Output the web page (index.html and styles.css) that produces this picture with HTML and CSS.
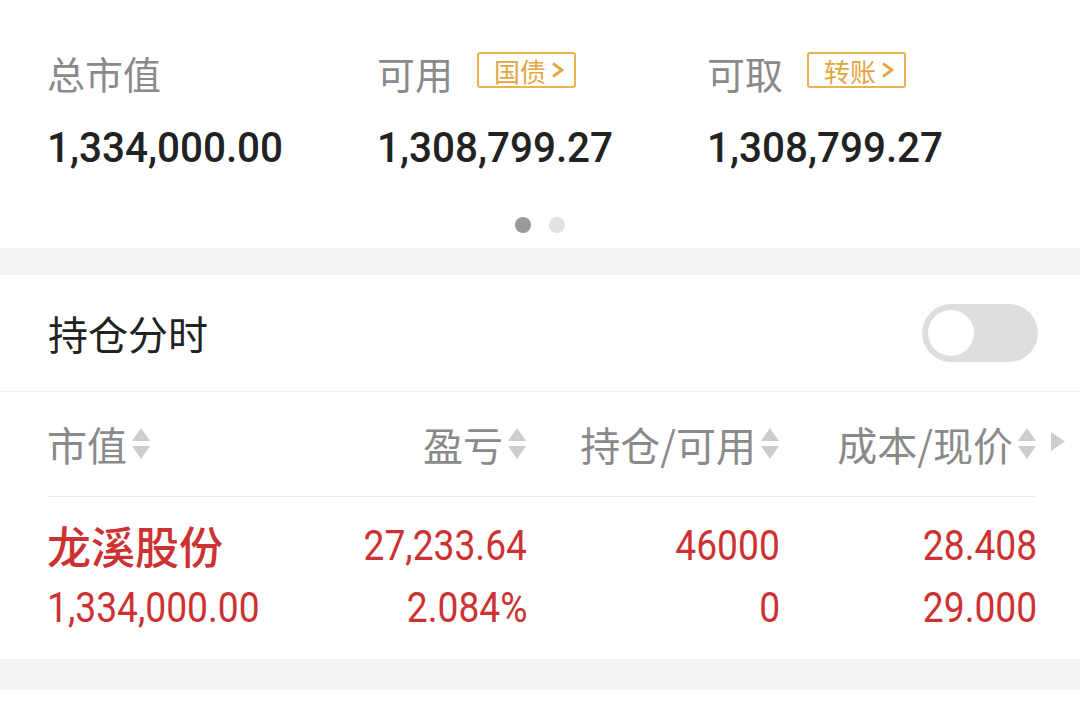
FILE: index.html
```html
<!DOCTYPE html>
<html lang="zh-CN">
<head>
  <meta charset="UTF-8">
  <meta name="viewport" content="width=device-width, initial-scale=1.0">
  <title>持仓</title>
  <link rel="stylesheet" href="styles.css">
</head>
<body>
  <!-- 资产概览 -->
  <section class="summary">
    <div class="stats">
      <div class="stat">
        <div class="stat-head"><span class="stat-label">总市值</span></div>
        <div class="stat-value"><span class="narrow">1,334,000.00</span></div>
      </div>
      <div class="stat">
        <div class="stat-head">
          <span class="stat-label">可用</span>
          <a href="#" class="badge">国债<svg class="chev" viewBox="0 0 13 16"><polyline points="2,1.5 11,8 2,14.5"/></svg></a>
        </div>
        <div class="stat-value"><span class="narrow">1,308,799.27</span></div>
      </div>
      <div class="stat">
        <div class="stat-head">
          <span class="stat-label">可取</span>
          <a href="#" class="badge">转账<svg class="chev" viewBox="0 0 13 16"><polyline points="2,1.5 11,8 2,14.5"/></svg></a>
        </div>
        <div class="stat-value"><span class="narrow">1,308,799.27</span></div>
      </div>
    </div>
    <div class="dots">
      <span class="dot active"></span>
      <span class="dot"></span>
    </div>
  </section>

  <div class="band"></div>

  <!-- 持仓列表 -->
  <section class="positions">
    <div class="switch-row">
      <span class="switch-title">持仓分时</span>
      <span class="switch"><span class="knob"></span></span>
    </div>

    <div class="table-head">
      <div class="cols">
        <span class="th left">市值<svg class="sort" viewBox="0 0 20 34"><polygon points="10,1 19,14 1,14"/><polygon points="1,19 19,19 10,32"/></svg></span>
        <span class="th">盈亏<svg class="sort" viewBox="0 0 20 34"><polygon points="10,1 19,14 1,14"/><polygon points="1,19 19,19 10,32"/></svg></span>
        <span class="th">持仓/可用<svg class="sort" viewBox="0 0 20 34"><polygon points="10,1 19,14 1,14"/><polygon points="1,19 19,19 10,32"/></svg></span>
        <span class="th">成本/现价<svg class="sort" viewBox="0 0 20 34"><polygon points="10,1 19,14 1,14"/><polygon points="1,19 19,19 10,32"/></svg></span>
      </div>
      <svg class="more" viewBox="0 0 14 19"><polygon points="0,0 14,9.5 0,19"/></svg>
    </div>

    <div class="row up">
      <div class="cell left">
        <div class="name">龙溪股份</div>
        <div class="num"><span class="narrow">1,334,000.00</span></div>
      </div>
      <div class="cell">
        <div class="num"><span class="narrow">27,233.64</span></div>
        <div class="num"><span class="narrow">2.084%</span></div>
      </div>
      <div class="cell">
        <div class="num"><span class="narrow">46000</span></div>
        <div class="num"><span class="narrow">0</span></div>
      </div>
      <div class="cell">
        <div class="num"><span class="narrow">28.408</span></div>
        <div class="num"><span class="narrow">29.000</span></div>
      </div>
    </div>
  </section>

  <div class="band band-bottom"></div>
</body>
</html>
```

FILE: styles.css
```css
/* 基础 */
body {
  margin: 0;
  background: #fff;
  font-family: "Noto Sans CJK SC", "Noto Sans", sans-serif;
  color: #222;
}

a {
  text-decoration: none;
}

/* 数字字体偏窄，用横向压缩模拟 */
.narrow {
  display: inline-block;
  vertical-align: top;
  font-family: Roboto, "Noto Sans", sans-serif;
  transform: scaleX(0.94);
  transform-origin: left center;
}

.cell .narrow {
  transform: scaleX(0.865);
  transform-origin: right center;
}

.cell.left .narrow {
  transform-origin: left center;
}

/* 资产概览 */
.summary {
  height: 248px;
  box-sizing: border-box;
  padding-top: 52px;
}

.stats {
  display: flex;
  padding-left: 47px;
}

.stat {
  width: 330px;
}

.stat-head {
  display: flex;
  align-items: flex-start;
  gap: 24px;
  height: 40px;
}

.stat-label {
  font-size: 38px;
  line-height: 42px;
  color: #8a8a8a;
}

.badge {
  display: flex;
  align-items: center;
  gap: 5px;
  height: 36px;
  box-sizing: border-box;
  padding: 0 10px 0 15px;
  border: 2px solid #e9b34f;
  border-radius: 3px;
  font-size: 26px;
  color: #e2a640;
}

.chev {
  width: 13px;
  height: 18px;
  fill: none;
  stroke: #e2a640;
  stroke-width: 2.8;
}

.stat-value {
  margin-top: 29px;
  font-size: 43px;
  font-weight: 500;
  line-height: 52px;
  color: #222;
}

.dots {
  display: flex;
  justify-content: center;
  gap: 18px;
  margin-top: 44px;
}

.dot {
  width: 16px;
  height: 16px;
  border-radius: 50%;
  background: #e2e2e2;
}

.dot.active {
  background: #999;
}

.band {
  height: 27px;
  background: #f4f4f4;
}

.band-bottom {
  height: 31px;
}

/* 持仓分时开关 */
.switch-row {
  display: flex;
  align-items: center;
  justify-content: space-between;
  height: 116px;
  padding: 0 42px 0 48px;
  border-bottom: 1px solid #efefef;
}

.switch-title {
  font-size: 40px;
  color: #222;
}

.switch {
  display: flex;
  align-items: center;
  width: 116px;
  height: 58px;
  box-sizing: border-box;
  padding: 0 6px;
  border-radius: 29px;
  background: #dedede;
}

.knob {
  width: 46px;
  height: 46px;
  border-radius: 50%;
  background: #fff;
}

/* 表头 */
.table-head {
  position: relative;
  height: 104px;
  margin: 0 45px 0 47px;
  border-bottom: 1px solid #e8e8e8;
}

.cols,
.row {
  display: grid;
  grid-template-columns: 253px 227px 253px 257px;
}

.cols {
  height: 100%;
  align-items: center;
}

.th {
  display: flex;
  align-items: center;
  justify-content: flex-end;
  gap: 4px;
  font-size: 40px;
  color: #8a8a8a;
}

.th.left {
  justify-content: flex-start;
}

.sort {
  width: 20px;
  height: 34px;
  fill: #cdcdcd;
}

.more {
  position: absolute;
  right: -30px;
  top: 40px;
  width: 14px;
  height: 19px;
  fill: #cdcdcd;
}

/* 持仓行 */
.row {
  height: 162px;
  box-sizing: border-box;
  padding: 17px 0 0 47px;
}

.cell {
  text-align: right;
}

.cell.left {
  text-align: left;
}

.up {
  color: #cd3232;
}

.name {
  font-size: 44px;
  font-weight: 500;
  line-height: 62px;
}

.num {
  height: 62px;
  font-size: 43px;
  line-height: 62px;
}
```
